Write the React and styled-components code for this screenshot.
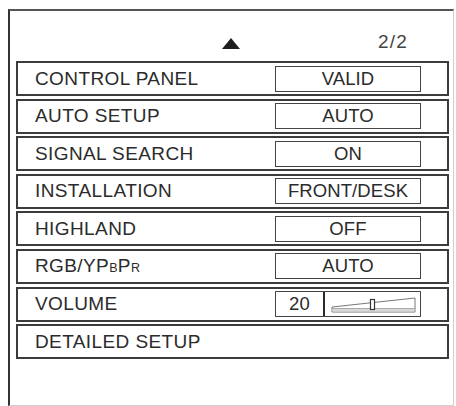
import styled, { createGlobalStyle } from 'styled-components'

const GlobalStyle = createGlobalStyle`
   html, body {
      margin: 0;
      padding: 0;
      background: #ffffff;
   }
   body {
      font-family: "Liberation Sans", Arial, sans-serif;
      color: #2e2e2e;
   }
`

// outer frame of the on-screen menu
const Frame = styled.div`
   box-sizing: border-box;
   margin: 9px 0 0 8px;
   width: 446px;
   height: 397px;
   border-top: 2px solid #555;
   border-left: 2px solid #333;
   border-right: 1px solid #cfcfcf;
   border-bottom: 1px solid #cfcfcf;
   padding: 0 4px 0 6px;
`

const Header = styled.div`
   display: grid;
   grid-template-columns: 206px 18px 1fr;
   align-items: end;
   height: 50px;
   padding-bottom: 10px;
   box-sizing: border-box;
`

const Arrow = styled.div`
   width: 0;
   height: 0;
   border-left: 9px solid transparent;
   border-right: 9px solid transparent;
   border-bottom: 11px solid #1e1e1e;
   margin-bottom: 2px;
`

const Page = styled.div`
   justify-self: end;
   padding-right: 41px;
   font-size: 19px;
   line-height: 18px;
   letter-spacing: 1.2px;
   color: #444;
`

const List = styled.div`
   display: flex;
   flex-direction: column;
   gap: 2.6px;
`

const Row = styled.div`
   box-sizing: border-box;
   height: 35px;
   border: 2px solid #3c3c3c;
   display: grid;
   grid-template-columns: 1fr 146px;
   align-items: center;
   padding: 0 26px 0 17px;
`

const Label = styled.div`
   font-size: 19px;
   letter-spacing: 0.4px;
   color: #2b2b2b;
   white-space: nowrap;
`

const Sub = styled.span`
   font-size: 12.5px;
   letter-spacing: 0.3px;
`

const ValueBox = styled.div`
   box-sizing: border-box;
   height: 26px;
   border: 1.5px solid #444;
   display: flex;
   align-items: center;
   justify-content: center;
   font-size: 18.5px;
   letter-spacing: 0.1px;
   color: #2b2b2b;
   white-space: nowrap;
`

const VolumeBox = styled(ValueBox)`
   justify-content: flex-start;
`

const VolumeNum = styled.div`
   width: 49px;
   height: 100%;
   box-sizing: border-box;
   border-right: 2.5px solid #2a2a2a;
   display: flex;
   align-items: center;
   justify-content: center;
`

const Slider = () => (
   <svg width="94" height="23" viewBox="0 0 94 23">
      <path d="M7 19 L7 14 L90 5 L90 19 Z" fill="#fff" stroke="#777" strokeWidth="1" />
      <rect x="7.5" y="15.5" width="82" height="3" fill="#d8d8d8" />
      <line x1="7" y1="15.5" x2="90" y2="15.5" stroke="#999" strokeWidth="0.8" />
      <rect x="45.5" y="6.5" width="4" height="10" fill="#fff" stroke="#333" strokeWidth="1.2" />
   </svg>
)

const items = [
   { label: 'CONTROL PANEL', value: 'VALID' },
   { label: 'AUTO SETUP', value: 'AUTO' },
   { label: 'SIGNAL SEARCH', value: 'ON' },
   { label: 'INSTALLATION', value: 'FRONT/DESK' },
   { label: 'HIGHLAND', value: 'OFF' },
   {
      label: (
         <>
            RGB/YP<Sub>B</Sub>P<Sub>R</Sub>
         </>
      ),
      value: 'AUTO',
   },
]

function App() {
   return (
      <>
         <GlobalStyle />
         <Frame>
            <Header>
               <span />
               <Arrow />
               <Page>2/2</Page>
            </Header>
            <List>
               {items.map((item, i) => (
                  <Row key={i}>
                     <Label>{item.label}</Label>
                     <ValueBox>{item.value}</ValueBox>
                  </Row>
               ))}
               <Row>
                  <Label>VOLUME</Label>
                  <VolumeBox>
                     <VolumeNum>20</VolumeNum>
                     <Slider />
                  </VolumeBox>
               </Row>
               <Row>
                  <Label>DETAILED SETUP</Label>
               </Row>
            </List>
         </Frame>
      </>
   )
}

export default App
